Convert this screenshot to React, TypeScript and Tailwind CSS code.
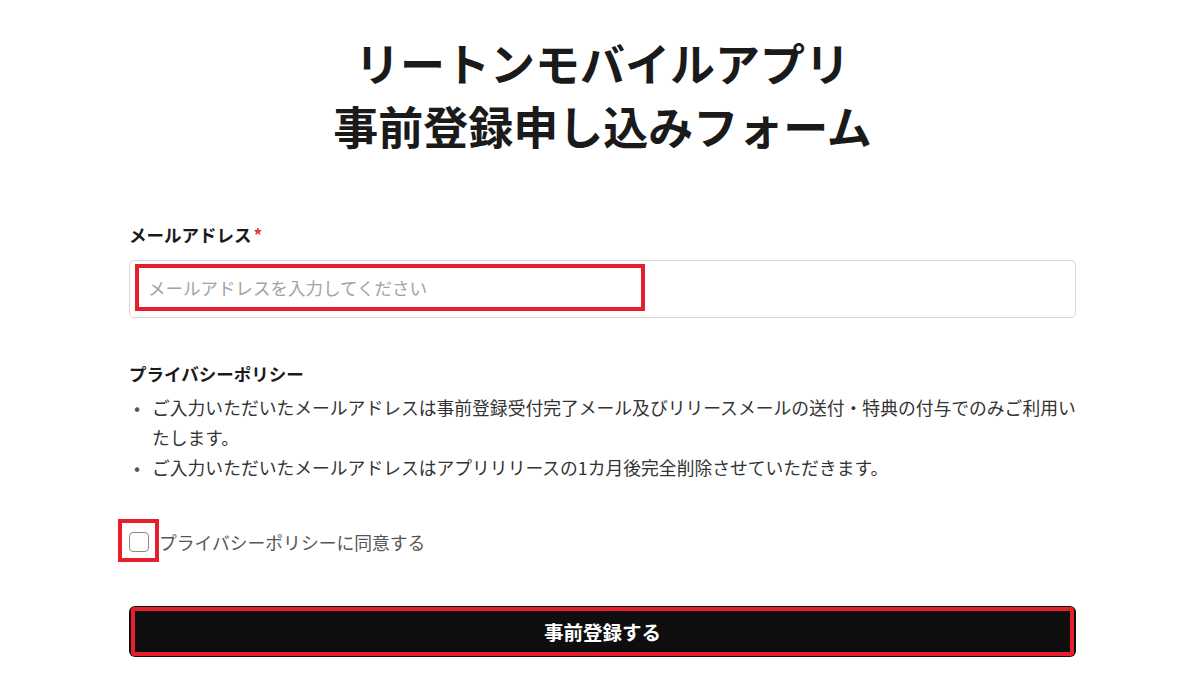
export default function App() {
  const font = { fontFamily: '"Noto Sans CJK JP", "Noto Sans", sans-serif' };

  return (
    <div className="min-h-[691px] w-full bg-white" style={font}>
      <div className="ml-[129px] w-[947px] pt-[31px]">
        <h1 className="text-center text-[45px] font-bold leading-[63px] text-[#1a1a1a]">
          リートンモバイルアプリ
          <br />
          事前登録申し込みフォーム
        </h1>

        {/* email */}
        <div className="mt-[66px]">
          <label className="block text-[17.5px] font-bold leading-[24px] text-[#1a1a1a]">
            メールアドレス<span className="ml-[2px] text-[#e8382f]">*</span>
          </label>
          <div className="relative mt-[13px]">
            <input
              type="email"
              placeholder="メールアドレスを入力してください"
              className="h-[58px] w-full rounded-[5px] border border-[#d8d8d2] bg-white px-[18px] pb-[4px] text-[17.5px] text-[#333] placeholder:text-[#a3a3a3] outline-none"
            />
            <div className="pointer-events-none absolute left-[6px] top-[4px] h-[47px] w-[510px] border-[4px] border-[#e51f2b]" />
          </div>
        </div>

        {/* privacy */}
        <div className="mt-[44px]">
          <h2 className="text-[17.5px] font-bold leading-[24px] text-[#1a1a1a]">プライバシーポリシー</h2>
          <ul className="mt-[6px] text-[17.8px] leading-[30px] text-[#333]">
            <li className="flex">
              <span className="w-[23px] shrink-0 pl-[5px] text-[#555]">•</span>
              <span>
                ご入力いただいたメールアドレスは事前登録受付完了メール及びリリースメールの送付・特典の付与でのみご利用いたします。
              </span>
            </li>
            <li className="flex">
              <span className="w-[23px] shrink-0 pl-[5px] text-[#555]">•</span>
              <span>ご入力いただいたメールアドレスはアプリリリースの1カ月後完全削除させていただきます。</span>
            </li>
          </ul>
        </div>

        {/* agree */}
        <label className="mt-[48px] flex items-center leading-[24px]">
          <span className="relative flex h-[20px] w-[20px] shrink-0 items-center justify-center">
            <span className="h-[20px] w-[20px] rounded-[4px] border-[1.5px] border-[#8a8a8a] bg-white" />
            <span className="pointer-events-none absolute left-[-11px] top-[-13px] h-[43px] w-[41px] border-[4px] border-[#e51f2b]" />
          </span>
          <span className="ml-[10px] text-[17.8px] text-[#555]">プライバシーポリシーに同意する</span>
        </label>

        {/* submit */}
        <div className="relative mt-[52px]">
          <button className="flex h-[51px] w-full items-center justify-center rounded-[6px] bg-[#0e0e0e] text-[19.5px] font-bold text-white">
            事前登録する
          </button>
          <div className="pointer-events-none absolute inset-x-[2px] inset-y-[1px] rounded-[3px] border-[4px] border-[#e51f2b]" />
        </div>
      </div>
    </div>
  );
}
